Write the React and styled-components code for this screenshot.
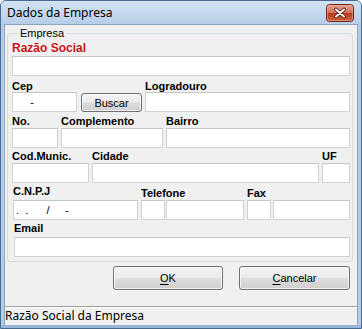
import styled, { createGlobalStyle } from "styled-components";

const Global = createGlobalStyle`
  html, body { margin: 0; padding: 0; background: #ffffff; }
  * { box-sizing: border-box; }
`;

const Window = styled.div`
  width: 362px;
  height: 329px;
  display: flex;
  flex-direction: column;
  border: 1px solid #4a6b90;
  border-radius: 6px 6px 0 0;
  background-color: #b2cbe6;
  overflow: hidden;
`;

const TitleBar = styled.div`
  height: 23px;
  display: flex;
  align-items: center;
  justify-content: space-between;
  padding: 0 7px 0 6px;
  background: linear-gradient(#d2e2f4, #b7cde8);
  font-family: "Noto Sans", "Liberation Sans", sans-serif;
  font-size: 12px;
  color: #000;
`;

const CloseIcon = styled.svg`
  display: block;
  margin-top: 1px;
`;

const Client = styled.div`
  flex: 1;
  margin: 0 3px 0 3px;
  background: #f0f0f0;
  border: 1px solid #8ea5c0;
  border-bottom: none;
  display: flex;
  flex-direction: column;
  padding: 2px 4px 0 2px;
`;

const Group = styled.fieldset`
  margin: 0;
  padding: 0 1px 4px 4px;
  border: 1px solid #d5dbe2;
  border-radius: 3px;
  font-family: "Liberation Sans", Arial, sans-serif;
`;

const Legend = styled.legend`
  margin-left: 7px;
  padding: 0 2px 0 1px;
  font-size: 11px;
  line-height: 13px;
  color: #000;
`;

const Row = styled.div`
  display: flex;
  align-items: flex-end;
  margin-top: ${(p) => p.$top}px;
  padding-left: ${(p) => p.$indent || 0}px;
  padding-right: 1px;
  gap: ${(p) => p.$gap ?? 3}px;
`;

const Field = styled.div`
  display: flex;
  flex-direction: column;
  width: ${(p) => (p.$w ? `${p.$w}px` : "auto")};
  flex: ${(p) => (p.$w ? "none" : "1 1 0")};
  min-width: 0;
`;

const Label = styled.div`
  font-size: 11px;
  font-weight: bold;
  line-height: 12px;
  color: #000;
  margin-bottom: ${(p) => p.$gap ?? 1}px;
  padding-top: ${(p) => p.$drop || 0}px;
`;

const TitleLabel = styled(Label)`
  font-size: 12px;
  line-height: 14px;
  color: #c8141e;
`;

const Inputs = styled.div`
  display: flex;
  gap: ${(p) => p.$gap ?? 1}px;
`;

const Box = styled.div`
  height: 20px;
  flex: none;
  width: ${(p) => (p.$w ? `${p.$w}px` : "auto")};
  background: #fff;
  border: 1px solid #d2d2d2;
  border-top-color: #c6c6c6;
  font-size: 11px;
  line-height: 18px;
  color: #000;
  white-space: pre;
  padding-left: 2px;
  overflow: hidden;
`;

const WideBox = styled(Box)`
  flex: 1 1 0;
  min-width: 0;
`;

const PushButton = styled.div`
  display: flex;
  align-items: center;
  justify-content: center;
  flex: none;
  width: ${(p) => p.$w}px;
  height: ${(p) => p.$h}px;
  border: 1px solid #707070;
  border-radius: 3px;
  background: linear-gradient(#f3f3f3 0%, #ebebeb 48%, #dddddd 52%, #cfcfcf 100%);
  box-shadow: inset 0 0 0 1px rgba(255, 255, 255, 0.7);
  font-family: "Liberation Sans", Arial, sans-serif;
  font-size: 11px;
  color: #000;
  u { text-underline-offset: 2px; }
`;

const SearchButton = styled(PushButton)`
  margin-left: 1px;
`;

const ButtonRow = styled.div`
  display: flex;
  justify-content: flex-end;
  gap: 16px;
  margin-top: 4px;
  padding-right: 3px;
`;

const Spacer = styled.div`
  flex: 1;
`;

const StatusBar = styled.div`
  height: 19px;
  margin: 0 -4px 0 -2px;
  border-top: 1px solid #a0a0a0;
  box-shadow: inset 0 1px 0 #ffffff;
  font-family: "Noto Sans", "Liberation Sans", sans-serif;
  font-size: 12px;
  line-height: 17px;
  color: #000;
`;

const BottomEdge = styled.div`
  height: 3px;
  background-color: #97b7d8;
`;

export default function App() {
  return (
    <>
      <Global />
      <Window>
        <TitleBar>
          <span>Dados da Empresa</span>
          <CloseIcon width="28" height="18" viewBox="0 0 28 18">
            <defs>
              <linearGradient id="closeFill" x1="0" y1="0" x2="0" y2="1">
                <stop offset="0" stopColor="#e6a391" />
                <stop offset="0.48" stopColor="#d2705a" />
                <stop offset="0.52" stopColor="#b93a20" />
                <stop offset="1" stopColor="#d0603f" />
              </linearGradient>
            </defs>
            <rect x="0.5" y="0.5" width="27" height="17" rx="3" fill="url(#closeFill)" stroke="#6e2416" />
            <rect x="1.5" y="1.5" width="25" height="15" rx="2" fill="none" stroke="#f0b8a8" strokeOpacity="0.5" />
            <path d="M10 5.5 L18 12.5 M18 5.5 L10 12.5" stroke="#4a1208" strokeWidth="3.6" strokeLinecap="round" />
            <path d="M10 5.5 L18 12.5 M18 5.5 L10 12.5" stroke="#ffffff" strokeWidth="2" strokeLinecap="round" />
          </CloseIcon>
        </TitleBar>
        <Client>
          <Group>
            <Legend>Empresa</Legend>
            <Row $top={1}>
              <Field>
                <TitleLabel>Razão Social</TitleLabel>
                <Box />
              </Field>
            </Row>
            <Row $top={4}>
              <Field $w={65}>
                <Label $gap={0}>Cep</Label>
                <Box>{"     -"}</Box>
              </Field>
              <SearchButton $w={61} $h={19}>Buscar</SearchButton>
              <Field>
                <Label $gap={0}>Logradouro</Label>
                <Box />
              </Field>
            </Row>
            <Row $top={3}>
              <Field $w={46}>
                <Label>No.</Label>
                <Box />
              </Field>
              <Field $w={102}>
                <Label>Complemento</Label>
                <Box />
              </Field>
              <Field>
                <Label>Bairro</Label>
                <Box />
              </Field>
            </Row>
            <Row $top={2}>
              <Field $w={77}>
                <Label>Cod.Munic.</Label>
                <Box />
              </Field>
              <Field $w={227}>
                <Label>Cidade</Label>
                <Box />
              </Field>
              <Field>
                <Label>UF</Label>
                <Box />
              </Field>
            </Row>
            <Row $top={2} $indent={1}>
              <Field $w={125}>
                <Label $gap={3}>C.N.P.J</Label>
                <Box>{".  .      /     -"}</Box>
              </Field>
              <Field $w={103}>
                <Label $gap={1} $drop={2}>Telefone</Label>
                <Inputs>
                  <Box $w={24} />
                  <WideBox />
                </Inputs>
              </Field>
              <Field>
                <Label $gap={1} $drop={2}>Fax</Label>
                <Inputs $gap={2}>
                  <Box $w={24} />
                  <WideBox />
                </Inputs>
              </Field>
            </Row>
            <Row $top={2} $indent={2}>
              <Field>
                <Label $gap={3}>Email</Label>
                <Box />
              </Field>
            </Row>
          </Group>
          <ButtonRow>
            <PushButton $w={110} $h={24}>
              <span><u>O</u>K</span>
            </PushButton>
            <PushButton $w={111} $h={24}>
              <span><u>C</u>ancelar</span>
            </PushButton>
          </ButtonRow>
          <Spacer />
          <StatusBar>Razão Social da Empresa</StatusBar>
        </Client>
        <BottomEdge />
      </Window>
    </>
  );
}
